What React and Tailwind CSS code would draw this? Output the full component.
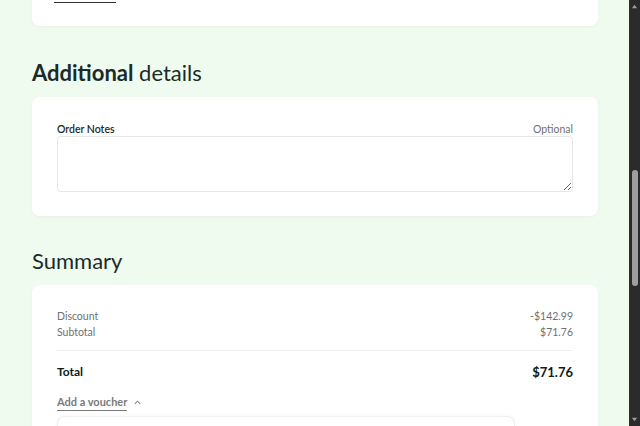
export default function App() {
  return (
    <div
      className="flex h-[426px] w-[640px] overflow-hidden bg-[#f0fbf0] text-[#1b2b28]"
      style={{ fontFamily: 'Lato, "Noto Sans", sans-serif' }}
    >
      <main className="flex-1 pl-[32px] pr-[31px]">
        <div className="h-[26px] rounded-b-lg bg-white pl-[22px] shadow-[0_1px_3px_rgba(0,0,0,0.04)]">
          <div className="w-[62px] border-b border-[#333]" style={{ height: 3 }} />
        </div>

        <h2 className="mt-[33px] text-[22px] leading-[28px]">
          <span className="font-bold">Additional</span> details
        </h2>

        <section className="mt-[10px] rounded-lg bg-white px-[25px] pb-[24px] pt-[24px] shadow-[0_1px_3px_rgba(0,0,0,0.04)]">
          <div className="flex items-center justify-between text-[10.5px] leading-[16px]">
            <label className="font-semibold text-[#1b2b28]">Order Notes</label>
            <span className="text-[#707070]">Optional</span>
          </div>
          <textarea className="-mt-[1px] block h-[56px] w-full rounded border border-[#e6e6e6] bg-white" />
        </section>

        <h2 className="mt-[31px] text-[22px] leading-[28px]">Summary</h2>

        <section className="mt-[10px] rounded-t-lg bg-white px-[25px] pt-[23px] shadow-[0_1px_3px_rgba(0,0,0,0.04)]">
          <div className="text-[10.5px] leading-[16px] text-[#707070]">
            <div className="flex justify-between">
              <span>Discount</span>
              <span>-$142.99</span>
            </div>
            <div className="flex justify-between">
              <span>Subtotal</span>
              <span>$71.76</span>
            </div>
          </div>
          <div className="mt-[10px] border-t border-[#f0f0f0]" />
          <div className="flex items-center justify-between pt-[11px]">
            <span className="text-[12px] font-bold leading-[20px] text-[#0f1a18]">Total</span>
            <span className="text-[13px] font-bold leading-[20px] text-[#0f1a18]">$71.76</span>
          </div>
          <button className="mt-[12px] flex items-center gap-[6px] text-[11px] font-bold leading-[16px] text-[#7a7a7a]">
            <span className="border-b border-[#7a7a7a]">Add a voucher</span>
            <svg width="9" height="9" viewBox="0 0 10 10" fill="none" stroke="#8a8a8a" strokeWidth="1.2">
              <path d="M2 6.5 L5 3.5 L8 6.5" />
            </svg>
          </button>
          <div className="mt-[5px] mr-[58px] h-[20px] rounded-t-lg border border-b-0 border-[#f3eded] shadow-[0_0_3px_rgba(200,160,160,0.15)]" />
        </section>
      </main>

      <div className="flex w-[11px] flex-col items-center bg-[#2b2b2b]">
        <svg width="7" height="7" viewBox="0 0 8 8" className="mt-[3px]">
          <path d="M1 6 L4 2 L7 6 Z" fill="#9a9a9a" />
        </svg>
        <div className="mt-[160px] h-[116px] w-[6px] rounded-full bg-[#9f9f9f]" />
        <div className="flex-1" />
        <svg width="7" height="7" viewBox="0 0 8 8" className="mb-[3px]">
          <path d="M1 2 L4 6 L7 2 Z" fill="#9a9a9a" />
        </svg>
      </div>
    </div>
  );
}
